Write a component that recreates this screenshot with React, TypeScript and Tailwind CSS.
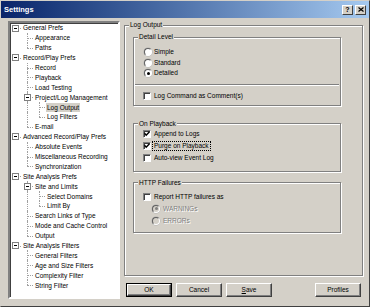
import React from 'react';

type Item = [number, string, boolean?];

const items: Item[] = [
  [0, 'General Prefs', true],
  [1, 'Appearance'],
  [1, 'Paths'],
  [0, 'Record/Play Prefs', true],
  [1, 'Record'],
  [1, 'Playback'],
  [1, 'Load Testing'],
  [1, 'Project/Log Management', true],
  [2, 'Log Output'],
  [2, 'Log Filters'],
  [1, 'E-mail'],
  [0, 'Advanced Record/Play Prefs', true],
  [1, 'Absolute Events'],
  [1, 'Miscellaneous Recording'],
  [1, 'Synchronization'],
  [0, 'Site Analysis Prefs', true],
  [1, 'Site and Limits', true],
  [2, 'Select Domains'],
  [2, 'Limit By'],
  [1, 'Search Links of Type'],
  [1, 'Mode and Cache Control'],
  [1, 'Output'],
  [0, 'Site Analysis Filters', true],
  [1, 'General Filters'],
  [1, 'Age and Size Filters'],
  [1, 'Complexity Filter'],
  [1, 'String Filter'],
];

// does the node (or ancestor) at level k have a sibling further down?
const continues = (i: number, k: number) => {
  for (let j = i + 1; j < items.length; j++) {
    if (items[j][0] < k) return false;
    if (items[j][0] === k) return true;
  }
  return false;
};

function TreeCell({ i, col }: { i: number; col: number }) {
  const [level, , expandable] = items[i];
  if (col < level) {
    return (
      <div className="relative w-[12px] h-full shrink-0">
        {col >= 1 && continues(i, col) && (
          <div className="absolute left-[5px] top-0 h-full border-l border-dotted border-[#a0a0a0]" />
        )}
      </div>
    );
  }
  return (
    <div className="relative w-[12px] h-full shrink-0">
      {level >= 1 && (
        <div
          className={`absolute left-[5px] top-0 border-l border-dotted border-[#a0a0a0] ${
            continues(i, level) ? 'h-full' : 'h-1/2'
          }`}
        />
      )}
      <div className="absolute left-[5px] top-1/2 w-[6px] border-t border-dotted border-[#a0a0a0]" />
      {expandable && (
        <div className="absolute left-[2px] top-[1.5px] w-[7px] h-[7px] bg-white border border-[#808080] flex items-center justify-center">
          <div className="w-[3px] h-px bg-black" />
        </div>
      )}
    </div>
  );
}

function Check({ checked }: { checked?: boolean }) {
  return (
    <span className="w-[8px] h-[8px] shrink-0 bg-white border border-t-[#808080] border-l-[#808080] border-b-white border-r-white shadow-[inset_1px_1px_0_#404040] flex items-center justify-center">
      {checked && (
        <svg width="6" height="6" viewBox="0 0 6 6">
          <path d="M0.5 2.3 L2.2 4.2 L5.5 0.8" stroke="#000" strokeWidth="1.5" fill="none" />
        </svg>
      )}
    </span>
  );
}

function Radio({ checked, disabled }: { checked?: boolean; disabled?: boolean }) {
  return (
    <span
      className={`w-[8px] h-[8px] shrink-0 rounded-full border border-t-[#606060] border-l-[#606060] border-b-white border-r-white shadow-[0_0_0_0.5px_#b0b0b0] flex items-center justify-center ${
        disabled ? 'bg-[#D4D0C8]' : 'bg-white'
      }`}
    >
      {checked && (
        <span className={`w-[3px] h-[3px] rounded-full ${disabled ? 'bg-[#808080]' : 'bg-black'}`} />
      )}
    </span>
  );
}

const groupCls =
  'border border-[#808080] shadow-[inset_1px_1px_0_#fff,1px_1px_0_#fff] min-w-0';
const legendCls = 'ml-[4px] px-[1px] bg-[#D4D0C8] leading-[8px]';

function Button({ children, def, w = 'w-[46px]' }: { children: React.ReactNode; def?: boolean; w?: string }) {
  return (
    <div className={`${w} h-[14px] ${def ? 'border border-black' : ''}`}>
      <div className="w-full h-full border border-t-white border-l-white border-b-[#404040] border-r-[#404040] shadow-[inset_-1px_-1px_0_#808080] flex items-center justify-center">
        {children}
      </div>
    </div>
  );
}

export default function App() {
  return (
    <div className="w-[370px] h-[307px] bg-[#D4D0C8] border border-t-[#D4D0C8] border-l-[#D4D0C8] border-b-[#404040] border-r-[#404040] overflow-hidden text-black text-[6.5px] font-['Liberation_Sans',Arial,sans-serif] flex flex-col">
      {/* Title bar */}
      <div className="h-[17px] shrink-0 bg-gradient-to-r from-[#0A246A] to-[#A6CAF0] flex items-center pl-[3px] pr-[3px]">
        <span className="text-white font-bold text-[7.5px] flex-1">Settings</span>
        <div className="flex gap-[2px]">
          <div className="w-[11px] h-[10px] bg-[#D4D0C8] border border-t-white border-l-white border-b-[#404040] border-r-[#404040] flex items-center justify-center font-bold text-[7px] leading-none">
            ?
          </div>
          <div className="w-[11px] h-[10px] bg-[#D4D0C8] border border-t-white border-l-white border-b-[#404040] border-r-[#404040] flex items-center justify-center">
            <svg width="6" height="5" viewBox="0 0 6 5">
              <path d="M0.5 0.5 L5.5 4.5 M5.5 0.5 L0.5 4.5" stroke="#000" strokeWidth="1.2" />
            </svg>
          </div>
        </div>
      </div>

      {/* Body */}
      <div className="flex pt-[3px] pl-[7px]">
        {/* Tree */}
        <div className="w-[112px] h-[278px] shrink-0 bg-white border-2 border-t-[#808080] border-l-[#808080] border-b-white border-r-white shadow-[inset_1px_1px_0_#404040] overflow-hidden">
          {items.map((it, i) => (
            <div key={i} className="flex h-[9.9px] items-center">
              {Array.from({ length: it[0] + 1 }).map((_, c) => (
                <TreeCell key={c} i={i} col={c} />
              ))}
              <span
                className={`whitespace-nowrap leading-[9px] px-[1px] ${
                  it[1] === 'Log Output' ? 'bg-[#D4D0C8]' : ''
                }`}
              >
                {it[1]}
              </span>
            </div>
          ))}
        </div>

        {/* Right side */}
        <div className="ml-[4px] w-[239px] flex flex-col">
          <fieldset className={`${groupCls} h-[255px]`}>
            <legend className={legendCls}>Log Output</legend>

            <fieldset className={`${groupCls} ml-[8px] w-[208px] mt-[4px] pb-[4px]`}>
              <legend className={legendCls}>Detail Level</legend>
              <div className="pt-[6px] pl-[10px]">
                <div className="flex items-center gap-[2px] h-[10.5px]">
                  <Radio />
                  <span>Simple</span>
                </div>
                <div className="flex items-center gap-[2px] h-[10.5px]">
                  <Radio />
                  <span>Standard</span>
                </div>
                <div className="flex items-center gap-[2px] h-[10.5px]">
                  <Radio checked />
                  <span>Detailed</span>
                </div>
              </div>
              <div className="mx-[1px] mt-[5px] border-t border-[#808080] border-b border-b-white" />
              <div className="mt-[5px] pl-[9px] flex items-center gap-[3px] h-[10px]">
                <Check />
                <span>Log Command as Comment(s)</span>
              </div>
            </fieldset>

            <fieldset className={`${groupCls} ml-[8px] w-[208px] mt-[14px] pb-[7px]`}>
              <legend className={legendCls}>On Playback</legend>
              <div className="pl-[9px]">
                <div className="flex items-center gap-[3px] h-[12px]">
                  <Check checked />
                  <span>Append to Logs</span>
                </div>
                <div className="flex items-center gap-[3px] h-[12px]">
                  <Check checked />
                  <span className="outline outline-1 outline-dotted outline-black px-[1px] -ml-[1px] leading-[8px]">
                    Purge on Playback
                  </span>
                </div>
                <div className="flex items-center gap-[3px] h-[12px]">
                  <Check />
                  <span>Auto-view Event Log</span>
                </div>
              </div>
            </fieldset>

            <fieldset className={`${groupCls} ml-[8px] w-[208px] mt-[7px] pb-[5px]`}>
              <legend className={legendCls}>HTTP Failures</legend>
              <div className="pl-[9px] pt-[5px]">
                <div className="flex items-center gap-[3px] h-[11px]">
                  <Check />
                  <span>Report HTTP failures as</span>
                </div>
                <div className="ml-[9px] flex items-center gap-[3px] h-[12px] text-[#808080] [text-shadow:1px_1px_0_#fff]">
                  <Radio checked disabled />
                  <span>WARNINGs</span>
                </div>
                <div className="ml-[9px] flex items-center gap-[3px] h-[12px] text-[#808080] [text-shadow:1px_1px_0_#fff]">
                  <Radio disabled />
                  <span>ERRORs</span>
                </div>
              </div>
            </fieldset>
          </fieldset>

          {/* Buttons */}
          <div className="flex mt-[7px] ml-[2px] pr-[2px]">
            <Button def>OK</Button>
            <div className="ml-[4px]">
              <Button>Cancel</Button>
            </div>
            <div className="ml-[4px]">
              <Button>
                <span>
                  <span className="underline">S</span>ave
                </span>
              </Button>
            </div>
            <div className="ml-auto">
              <Button>Profiles</Button>
            </div>
          </div>
        </div>
      </div>
    </div>
  );
}
